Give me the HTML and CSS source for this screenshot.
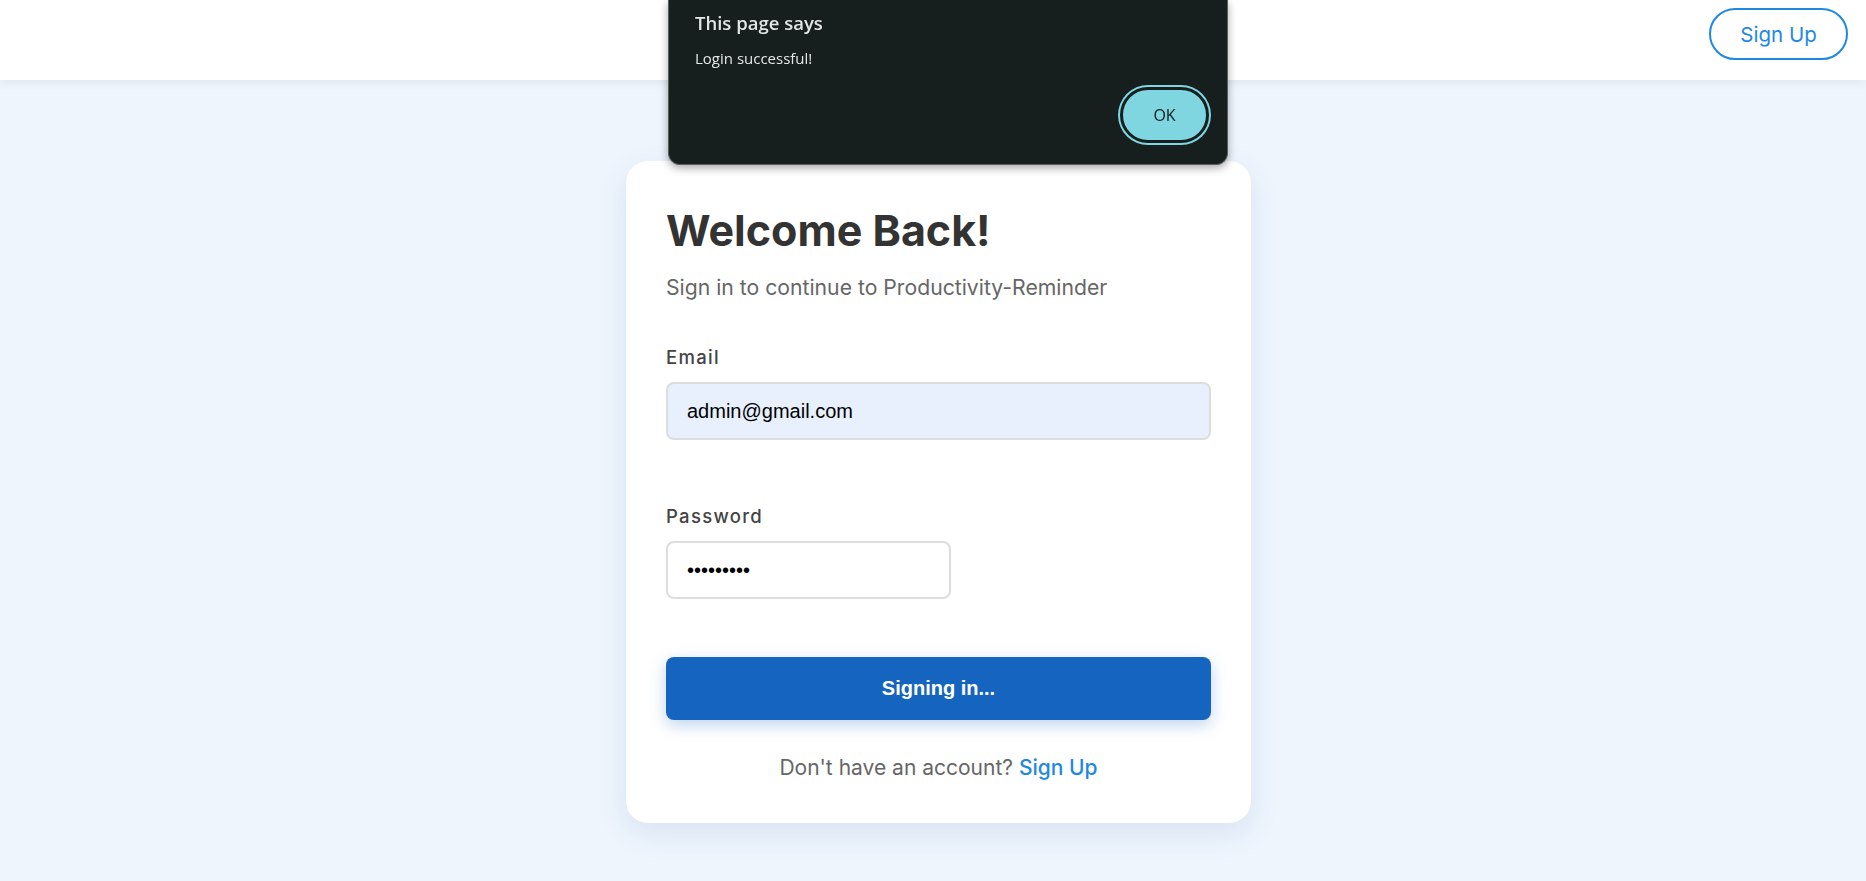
FILE: index.html
```html
<!DOCTYPE html>
<html lang="en">
<head>
<meta charset="utf-8">
<title>Login</title>
<link rel="stylesheet" href="styles.css">
</head>
<body>
<header class="navbar">
  <a class="nav-signup" href="#">Sign Up</a>
</header>
<main class="page">
  <section class="card">
    <h1 class="title">Welcome Back!</h1>
    <p class="subtitle">Sign in to continue to Productivity-Reminder</p>
    <form class="form">
      <label class="label" for="email">Email</label>
      <input class="input input-email" id="email" type="email" value="admin@gmail.com">
      <label class="label label-password" for="password">Password</label>
      <input class="input input-password" id="password" type="password" value="123456789">
      <button class="submit" type="button">Signing in...</button>
    </form>
    <p class="footer">Don't have an account? <a class="footer-link" href="#">Sign Up</a></p>
  </section>
</main>
<div class="alert">
  <div class="alert-title">This page says</div>
  <div class="alert-msg">Login successful!</div>
  <div class="alert-actions">
    <button class="alert-ok" type="button">OK</button>
  </div>
</div>
</body>
</html>
```
FILE: styles.css
```css
* { box-sizing: border-box; }
html, body { margin: 0; padding: 0; }
body {
  background: #eef5fd;
  font-family: Inter, "Noto Sans", sans-serif;
  min-height: 881px;
}
.navbar {
  height: 80px;
  background: #ffffff;
  box-shadow: 0 2px 10px rgba(0, 0, 0, 0.07);
  display: flex;
  justify-content: flex-end;
  align-items: flex-start;
  padding: 8px 18px 0 0;
}
.nav-signup {
  width: 139px;
  height: 52px;
  border: 2px solid #1e88e5;
  border-radius: 30px;
  color: #1e88e5;
  font-size: 20.5px;
  font-weight: 400;
  text-decoration: none;
  display: flex;
  align-items: center;
  justify-content: center;
}
.page {
  display: flex;
  justify-content: center;
  padding: 81px 0 0 11px;
}
.card {
  width: 625px;
  background: #ffffff;
  border-radius: 22px;
  padding: 44px 40px 41px;
  box-shadow: 0 10px 30px rgba(30, 80, 140, 0.10);
}
.title {
  margin: 0;
  font-size: 43px;
  line-height: 50px;
  font-weight: 700;
  color: #333333;
}
.subtitle {
  margin: 18px 0 0;
  font-size: 21.2px;
  line-height: 28px;
  color: #666666;
}
.form {
  display: flex;
  flex-direction: column;
  align-items: flex-start;
}
.label {
  margin-top: 44px;
  font-size: 18.5px;
  line-height: 24px;
  font-weight: 500;
  letter-spacing: 1.3px;
  color: #444444;
}
.label-password { margin-top: 64px; }
.input {
  margin-top: 13px;
  height: 58px;
  border: 2px solid #dddddd;
  border-radius: 8px;
  padding: 0 19px;
  font-family: "Liberation Sans", Arial, sans-serif;
  font-size: 20px;
  color: #000000;
  background: #ffffff;
  outline: none;
}
.input-email {
  width: 100%;
  background: #e8f0fe;
}
.input-password {
  width: 285px;
  height: 58px;
  margin-top: 13px;
}
.submit {
  margin-top: 58px;
  width: 100%;
  height: 63px;
  border: none;
  border-radius: 8px;
  background: #1565c0;
  color: #ffffff;
  font-family: "Liberation Sans", Arial, sans-serif;
  font-size: 20px;
  font-weight: 700;
  box-shadow: 0 5px 16px rgba(21, 101, 192, 0.28);
}
.footer {
  margin: 34px 0 0;
  text-align: center;
  font-size: 21px;
  line-height: 28px;
  color: #666666;
}
.footer-link {
  color: #1e88e5;
  font-weight: 500;
  text-decoration: none;
}
.alert {
  position: fixed;
  top: 0;
  left: 668px;
  width: 560px;
  height: 165px;
  background: #171e1e;
  border: 1px solid #5a5f60;
  border-top: none;
  border-radius: 0 0 12px 12px;
  box-shadow: 0 3px 8px rgba(0, 0, 0, 0.35);
  padding: 11px 0 0 26px;
  font-family: "Open Sans", "Noto Sans", sans-serif;
  color: #e3e6e6;
}
.alert-title {
  font-size: 18.5px;
  line-height: 24px;
  font-weight: 600;
}
.alert-msg {
  margin-top: 13px;
  font-size: 15px;
  line-height: 20px;
}
.alert-actions {
  display: flex;
  justify-content: flex-end;
  padding-right: 18px;
  margin-top: 19px;
}
.alert-ok {
  width: 89px;
  height: 56px;
  border-radius: 28px;
  background: #7fd6e0;
  border: 3px solid #171e1e;
  box-shadow: 0 0 0 2px #7fd6e0;
  color: #0d1b1d;
  font-family: "Open Sans", "Noto Sans", sans-serif;
  font-size: 16px;
  font-weight: 500;
}
```
